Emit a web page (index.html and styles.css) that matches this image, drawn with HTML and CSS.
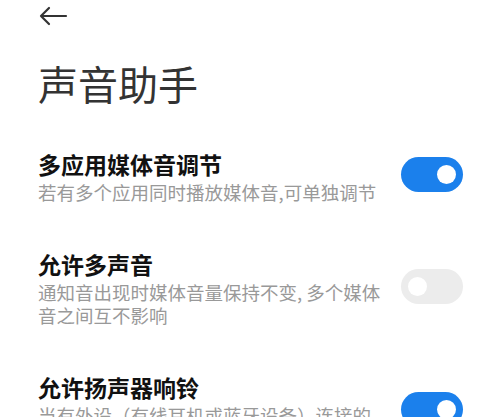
FILE: index.html
```html
<!DOCTYPE html>
<html lang="zh-CN">
<head>
<meta charset="utf-8">
<title>声音助手</title>
<link rel="stylesheet" href="styles.css">
</head>
<body>
<div class="page">
  <header class="topbar">
    <svg class="back" width="30" height="20" viewBox="0 0 30 20" aria-label="返回">
      <path d="M28 10 H3 M11 2 L3 10 L11 18" fill="none" stroke="#333" stroke-width="2.2" stroke-linecap="round" stroke-linejoin="round"/>
    </svg>
  </header>
  <h1 class="heading">声音助手</h1>
  <ul class="list">
    <li class="item">
      <div class="text">
        <div class="title">多应用媒体音调节</div>
        <div class="desc">若有多个应用同时播放媒体音,可单独调节</div>
      </div>
      <div class="switch on"><span class="knob"></span></div>
    </li>
    <li class="item">
      <div class="text">
        <div class="title">允许多声音</div>
        <div class="desc">通知音出现时媒体音量保持不变, 多个媒体音之间互不影响</div>
      </div>
      <div class="switch off"><span class="knob"></span></div>
    </li>
    <li class="item">
      <div class="text">
        <div class="title">允许扬声器响铃</div>
        <div class="desc">当有外设（有线耳机或蓝牙设备）连接的时候，来电铃声同时通过扬声器播放</div>
      </div>
      <div class="switch on"><span class="knob"></span></div>
    </li>
  </ul>
</div>
</body>
</html>
```
FILE: styles.css
```css
html, body {
  margin: 0;
  padding: 0;
  background: #ffffff;
  overflow: hidden;
  height: 100%;
}
body {
  font-family: "Noto Sans CJK SC", "Noto Sans", sans-serif;
  color: #000;
}
.page {
  width: 500px;
}
.topbar {
  height: 32px;
  display: flex;
  align-items: center;
  padding-left: 38px;
}
.back {
  display: block;
}
.heading {
  margin: 26px 0 0 38px;
  font-size: 40px;
  line-height: 50px;
  font-weight: 400;
  color: #333;
}
.list {
  list-style: none;
  margin: 0;
  padding: 19px 0 0 0;
}
.item {
  display: flex;
  align-items: center;
  padding: 23px 37px 23px 38px;
  gap: 13px;
}
.text {
  width: 350px;
  flex: none;
}
.title {
  font-size: 23px;
  line-height: 28px;
  font-weight: 700;
  color: #111;
}
.desc {
  margin-top: 3px;
  font-size: 18.5px;
  line-height: 23px;
  color: #999;
}
.switch {
  width: 62px;
  height: 35px;
  border-radius: 18px;
  flex: none;
  position: relative;
  margin-top: -5px;
}
.switch.on {
  background: #1b80ec;
}
.switch.off {
  background: #ececec;
}
.knob {
  position: absolute;
  top: 8px;
  width: 19px;
  height: 19px;
  border-radius: 50%;
  background: #fff;
}
.switch.on .knob {
  right: 7px;
}
.switch.off .knob {
  left: 7px;
}
```
